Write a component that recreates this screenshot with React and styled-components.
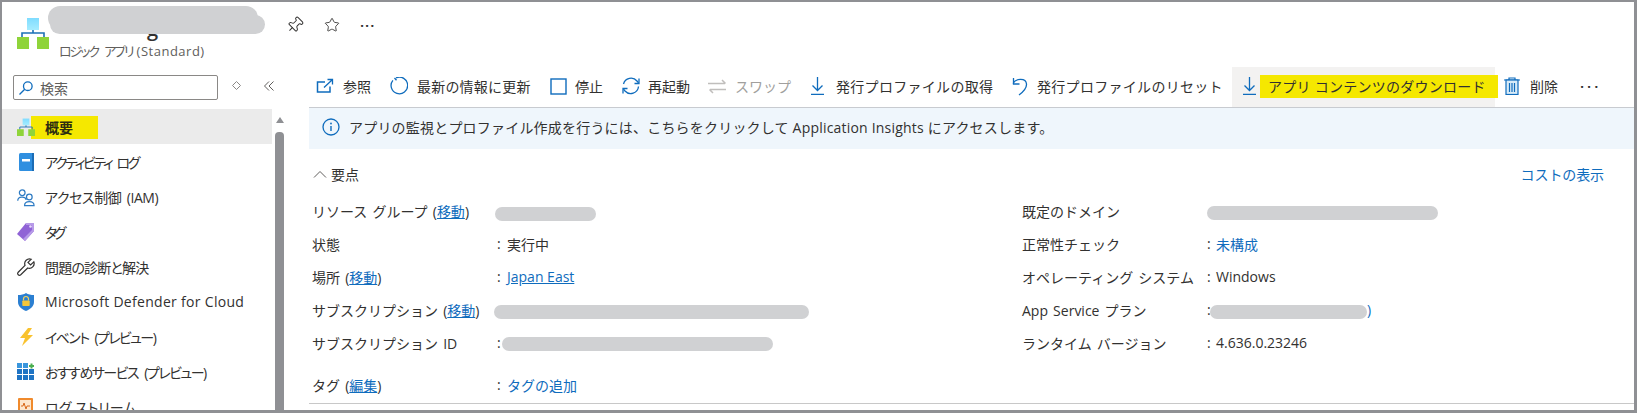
import React from "react";
import styled, { createGlobalStyle } from "styled-components";
import { Pin, Star } from "lucide-react";

const Global = createGlobalStyle`
  html, body { margin: 0; padding: 0; background: #fff; }
  * { box-sizing: border-box; }
  body { font-family: "Open Sans", "Noto Sans CJK JP", sans-serif; font-size: 14px; color: #323130; }
`;

const Frame = styled.div`
  width: 1637px; height: 413px; border: solid #8f9094; border-width: 2px 3px 3px 2px;
  overflow: hidden; display: flex; flex-direction: column; background: #fff;
`;
const Header = styled.header`
  height: 65px; flex: none; display: flex; padding: 15px 0 0 15px;
`;
const TitleBlock = styled.div`
  margin-left: 10px; width: 227px; position: relative; margin-top: -13px;
`;
const TitleText = styled.div`
  font-size: 20px; font-weight: 600; height: 39px; line-height: 28px; padding: 11px 0 0 88px; overflow: hidden;
`;
const TitleMask = styled.div`
  position: absolute; background: #d0d1d3; border-radius: 12px;
  left: ${p => p.$l}px; top: ${p => p.$t}px; width: ${p => p.$w}px; height: ${p => p.$h}px;
`;
const Subtitle = styled.div`
  font-size: 13px; line-height: 18px; color: #605e5c; white-space: nowrap; margin-top: -1px; letter-spacing: 0.5px;
`;
const SubtitleKana = styled.span`
  font-feature-settings: "palt"; letter-spacing: -2.1px; word-spacing: 5px; margin-right: 4px;
`;
const HeaderActions = styled.div`
  display: flex; align-items: center; height: 20px; margin: -2px 0 0 0; color: #323130; gap: 20px;
`;
const Dots = styled.span`
  font-size: 15px; line-height: 1; letter-spacing: ${p => p.$ls ?? 1}px; color: ${p => p.$c || "#323130"}; font-weight: 600;
`;
const Body = styled.div`flex: 1; display: flex; min-height: 0;`;
const Sidebar = styled.aside`width: 307px; flex: none; display: flex; flex-direction: column;`;
const SearchRow = styled.div`
  height: 42px; flex: none; padding: 8px 0 0 11px; display: flex; align-items: flex-start;
`;
const SearchBox = styled.div`
  width: 205px; height: 25px; border: 1px solid #8a8886; border-radius: 2px; display: flex; align-items: center;
  padding-left: 5px; gap: 7px; font-size: 14px; color: #605e5c;
`;
const SideTool = styled.span`
  display: flex; margin-top: 6px; margin-left: ${p => p.$ml}px; color: #8a8886;
`;
const SideBody = styled.div`display: flex; flex: 1; min-height: 0;`;
const Nav = styled.nav`width: 270px; flex: none;`;
const NavItem = styled.div`
  height: 35px; display: flex; align-items: center; padding-left: 15px; gap: 10px; white-space: nowrap;
  background: ${p => (p.$active ? "#ebebeb" : "transparent")};
`;
const NavIcon = styled.span`width: 18px; height: 18px; flex: none; display: flex; position: relative; z-index: 1;`;
const NavLabel = styled.span`
  font-size: 14px; font-feature-settings: "palt"; letter-spacing: ${p => p.$ls ?? 0}px; word-spacing: ${p => p.$ws ?? 0}px;
`;
const Marked = styled.span`
  background: #f5e800; margin-left: -14px; padding: 0 25px 0 14px; height: 23px; line-height: 23px; font-weight: 600;
  color: #2e2e10; margin-top: 1px;
`;
const Scroll = styled.div`
  width: 9px; margin-left: 3px; display: flex; flex-direction: column; align-items: center;
`;
const ScrollUp = styled.div`
  width: 0; height: 0; margin-top: 8px; border: 4.5px solid transparent; border-top: 0; border-bottom: 6px solid #8f9094;
`;
const ScrollThumb = styled.div`
  width: 9px; flex: 1; margin-top: 9px; background: #8f9094; border-radius: 4px 4px 0 0;
`;
const Main = styled.main`flex: 1; min-width: 0; display: flex; flex-direction: column;`;
const Toolbar = styled.div`
  height: 41px; flex: none; display: flex; border-bottom: 1px solid #c8cbd0;
`;
const ToolItem = styled.div`
  width: ${p => p.$w}px; flex: none; display: flex; align-items: center; white-space: nowrap;
  padding-left: ${p => p.$pad ?? 7}px; padding-bottom: 2px;
  background: ${p => (p.$active ? "#f3f2f1" : "transparent")};
  color: ${p => (p.$off ? "#a19f9d" : "#323130")};
`;
const ToolIcon = styled.span`
  width: ${p => p.$w ?? 27}px; flex: none; display: flex;
`;
const ToolLabel = styled.span`letter-spacing: ${p => p.$ls ?? 0}px;`;
const MarkedTool = styled.span`
  background: #f5e800; height: 23px; line-height: 23px; margin-left: -8px; padding: 0 12px 0 8px; letter-spacing: ${p => p.$ls ?? 0}px;
`;
const Banner = styled.div`
  height: 41px; flex: none; background: #eff6fc; display: flex; align-items: center; padding: 0 0 3px 13px; gap: 9px;
  letter-spacing: 0.2px; white-space: nowrap;
`;
const Essentials = styled.div`
  height: 45px; flex: none; display: flex; align-items: center; justify-content: space-between;
  padding: 5px 30px 0 4px;
`;
const EssentialsToggle = styled.div`display: flex; align-items: center; gap: 4px;`;
const CostLink = styled.a`color: #0f6cbd; text-decoration: none; letter-spacing: -0.1px;`;
const Columns = styled.div`display: grid; grid-template-columns: 710px 1fr; padding-left: 3px;`;
const Col = styled.div`display: flex; flex-direction: column;`;
const Row = styled.div`
  height: 33px; display: grid; grid-template-columns: 185px 1fr; align-items: center; white-space: nowrap;
`;
const Label = styled.span`word-spacing: 1.5px;`;
const Value = styled.span`display: flex; align-items: center;`;
const Colon = styled.span`width: ${p => p.$w ?? 10}px; flex: none; color: #323130;`;
const InlineLink = styled.a`color: #0f6cbd; text-decoration: underline;`;
const PlainLink = styled.a`color: #0f6cbd; text-decoration: none;`;
const Redacted = styled.span`
  display: block; height: 14px; border-radius: 7px; background: #d0d1d3;
  width: ${p => p.$w}px; margin-left: ${p => p.$ml ?? 0}px; margin-top: ${p => p.$mt ?? 0}px;
`;
const TagRow = styled(Row)`margin-top: 9px;`;
const Rule = styled.div`height: 1px; background: #c8c8c8; margin-top: 2px;`;

const Blue = "#0f6cbd";
const LogicIcon = ({ size = 32 }) => (
  <svg width={size} height={size} viewBox="0 0 32 32" style={{ flex: "none" }}>
    <defs>
      <linearGradient id="lgTop" x1="0" y1="0" x2="0" y2="1"><stop offset="0" stopColor="#7fdcff" /><stop offset="1" stopColor="#a5ecff" /></linearGradient>
    </defs>
    <path d="M16 12v4M5 21v-5h22v5" fill="none" stroke="#1c70b6" strokeWidth="1.6" />
    <rect x="10" y="1" width="12" height="12" fill="url(#lgTop)" />
    <rect x="0" y="20" width="12" height="12" fill="#8fd43a" />
    <rect x="20" y="20" width="12" height="12" fill="#8fd43a" />
  </svg>
);
const S = ({ w = 18, h = 18, vb = "0 0 18 18", children }) => (
  <svg width={w} height={h} viewBox={vb} fill="none" stroke={Blue} strokeWidth="1.3" style={{ flex: "none" }}>{children}</svg>
);
const OpenIcon = () => <S><path d="M9 5H1.5v10H14V9.5" strokeWidth="1.5" /><path d="M8 10.5 16 3M11.5 2.5h5v5" strokeWidth="1.3" /></S>;
const RefreshIcon = () => <S><path d="M4.500 1 6.500 3.300" /><path d="M6 .9A8.300 8.300 0 1 1 2.900 3.300" /></S>;
const StopIcon = () => <S w={17} h={17} vb="0 0 17 17"><rect x="1" y="1" width="15" height="15" strokeWidth="1.4" /></S>;
const RestartIcon = () => (
  <S w={20} h={20} vb="0 0 20 20">
    <path d="M2.5 8A7.8 7.8 0 0 1 16 5l1.5 1.8" />
    <path d="M17.5 10.5A7.8 7.8 0 0 1 4 15l-1.5-1.8" />
    <path d="M18 2.5v5h-4.5M2 17.5v-5h4.5" fill="none" />
  </S>
);
const SwapIcon = () => (
  <svg width="19" height="15" viewBox="0 0 19 15" fill="none" stroke="#c0bebc" strokeWidth="1.5" style={{ flex: "none" }}>
    <path d="M0 4.5h17M14 1l3.5 3.5M18 10.5H2M5 14 1.5 10.5" />
  </svg>
);
const DownIcon = () => <S w={13} h={18} vb="0 0 13 18"><path d="M6.5 0v13.5M1.5 8.5l5 5 5-5M0 17.3h13" /></S>;
const ResetIcon = () => <S w={16} h={19} vb="0 0 16 19"><path d="M1 6.5C4 1 14 1 14.5 7c.3 4-3.500 8-7.500 11M1.500 1v6h6" /></S>;
const TrashIcon = () => (
  <S w={16} h={18} vb="0 0 16 18">
    <path d="M0 3h16M5 3V1h6v2" strokeWidth="1.2" />
    <rect x="2" y="3" width="12" height="14.500" fill="#d8ebf8" strokeWidth="1.2" />
    <path d="M5.500 6v9M8 6v9M10.500 6v9" strokeWidth="1.2" />
  </S>
);
const InfoIcon = () => (
  <S><circle cx="9" cy="9" r="8" /><path d="M9 8v5" strokeWidth="1.4" /><circle cx="9" cy="5.500" r=".9" fill={Blue} stroke="none" /></S>
);
const SearchIcon = () => <S w={14} h={14} vb="0 0 14 14"><circle cx="8.800" cy="5.200" r="4.300" /><path d="M5.700 8.300 0.500 13.500" /></S>;
const Diamond = () => (
  <svg width="9" height="9" viewBox="0 0 9 9" fill="none" stroke="#8a8886"><path d="M4.500.5l4 4-4 4-4-4z" /></svg>
);
const DoubleLeft = () => (
  <svg width="10" height="10" viewBox="0 0 10 10" fill="none" stroke="#605e5c"><path d="M5 .5.500 5 5 9.500M9.500.5 5 5l4.500 4.500" /></svg>
);
const ChevronUp = () => (
  <svg width="14" height="8" viewBox="0 0 14 8" fill="none" stroke="#605e5c"><path d="M1 7.500l6-6 6 6" /></svg>
);
const BookIcon = () => (
  <svg width="15" height="18" viewBox="0 0 15 18" style={{ marginLeft: 2 }}>
    <rect width="15" height="18" rx="1.500" fill="#2f8fe0" /><rect x="13" width="2" height="18" fill="#1b6cb5" />
    <rect x="3" y="6" width="8" height="2.500" fill="#fff" />
  </svg>
);
const PeopleIcon = () => (
  <svg width="19" height="19" viewBox="0 0 19 19" fill="none" stroke="#2f7cc4" strokeWidth="1.3">
    <circle cx="5.500" cy="4.500" r="3" /><path d="M.8 13c0-5 8-5 9-1" />
    <circle cx="13" cy="9" r="3" /><path d="M8 18c0-5.500 10-5.500 10 0z" />
  </svg>
);
const TagIcon = () => (
  <svg width="17" height="18" viewBox="0 0 17 18">
    <path d="M9 0h8v8l-9 10-8-7z" fill="#9063d6" /><path d="M9 0h8v8L8 18l-2-2 9-9V2H9z" fill="#b79ae8" />
    <circle cx="13.500" cy="3.500" r="1.300" fill="#e8ddfa" />
  </svg>
);
const WrenchIcon = () => (
  <svg width="18" height="18" viewBox="0 0 18 18" fill="none" stroke="#323130" strokeWidth="1.200">
    <path d="M16.800 3.800 13.600 7 11 4.400 14.200 1.200A4.800 4.800 0 0 0 8 7.300L1 14.500a1.800 1.800 0 0 0 2.500 2.500l7.200-7a4.800 4.800 0 0 0 6.100-6.200z" />
  </svg>
);
const ShieldIcon = () => (
  <svg width="16" height="18" viewBox="0 0 16 18" style={{ marginLeft: 1 }}>
    <path d="M8 0c2 1.500 5 2 8 2v7c0 4-3 7-8 9-5-2-8-5-8-9V2c3 0 6-.5 8-2z" fill="#2b7fd1" />
    <path d="M5.500 7.500V6a2.500 2.500 0 0 1 5 0v1.500" fill="none" stroke="#f4d25a" strokeWidth="1.200" />
    <rect x="4.300" y="7.500" width="7.400" height="5.500" rx=".8" fill="#f4c63a" />
  </svg>
);
const BoltIcon = () => (
  <svg width="13" height="18" viewBox="0 0 13 18" style={{ marginLeft: 3 }}>
    <path d="M8 0 0 10h5l-3 8 11-11H7.500L12 0z" fill="#f9c22e" />
  </svg>
);
const GridIcon = () => (
  <svg width="17" height="17" viewBox="0 0 17 17">
    {[0, 1, 2].flatMap(r => [0, 1, 2].map(c => (r === 0 && c === 2) ? null : (
      <rect key={`${r}${c}`} x={c * 6} y={r * 6} width="5" height="5" fill={r === 0 ? "#3a96dd" : "#1f74c4"} />
    )))}
    <path d="M12 3h5M14.500.5v5" stroke="#4caf50" strokeWidth="2" />
  </svg>
);
const LogIcon = () => (
  <svg width="15" height="15" viewBox="0 0 15 15" style={{ marginLeft: 1 }}>
    <rect width="15" height="15" rx="1" fill="#f08a2c" /><rect x="2" y="2" width="11" height="11" fill="#fde6cc" />
    <path d="M3 8h2l1-3 2 6 1-3h3" fill="none" stroke="#d9691a" />
  </svg>
);

const navItems = [
  [<BookIcon />, "アクティビティ ログ", -2.4, 4],
  [<PeopleIcon />, "アクセス制御 (IAM)", -0.4, 2],
  [<TagIcon />, "タグ", -3.5, 0],
  [<WrenchIcon />, "問題の診断と解決", -0.8, 0],
  [<ShieldIcon />, "Microsoft Defender for Cloud", 0.3, 0],
  [<BoltIcon />, "イベント (プレビュー)", -1.6, 4],
  [<GridIcon />, "おすすめサービス (プレビュー)", -1.5, 4],
  [<LogIcon />, "ログ ストリーム", 0, 0],
];

const tools = [
  { w: 74, icon: <OpenIcon />, label: "参照" },
  { w: 160, icon: <RefreshIcon />, label: "最新の情報に更新", ls: 0.2 },
  { w: 71, icon: <StopIcon />, label: "停止", iw: 25 },
  { w: 87, icon: <RestartIcon />, label: "再起動" },
  { w: 103, icon: <SwapIcon />, label: "スワップ", off: true },
  { w: 201, icon: <DownIcon />, label: "発行プロファイルの取得", iw: 25, ls: 0.3 },
  { w: 227, icon: <ResetIcon />, label: "発行プロファイルのリセット", iw: 25, ls: 0.3 },
];

export default function App() {
  return (
    <>
      <Global />
      <Frame>
        <Header>
          <LogicIcon />
          <TitleBlock>
            <TitleText>g</TitleText>
            <TitleMask $l={-11} $t={2} $w={210} $h={24} />
            <TitleMask $l={-9} $t={11} $w={215} $h={19} />
            <Subtitle><SubtitleKana>ロジック アプリ</SubtitleKana>(Standard)</Subtitle>
          </TitleBlock>
          <HeaderActions>
            <Pin size={18} strokeWidth={1.3} style={{ transform: "rotate(45deg)" }} />
            <Star size={16} strokeWidth={1.3} />
            <Dots>···</Dots>
          </HeaderActions>
        </Header>
        <Body>
          <Sidebar>
            <SearchRow>
              <SearchBox><SearchIcon />検索</SearchBox>
              <SideTool $ml={14}><Diamond /></SideTool>
              <SideTool $ml={23}><DoubleLeft /></SideTool>
            </SearchRow>
            <SideBody>
              <Nav>
                <NavItem $active>
                  <NavIcon><LogicIcon size={18} /></NavIcon>
                  <Marked>概要</Marked>
                </NavItem>
                {navItems.map(([icon, label, ls, ws]) => (
                  <NavItem key={label}>
                    <NavIcon>{icon}</NavIcon>
                    <NavLabel $ls={ls} $ws={ws}>{label}</NavLabel>
                  </NavItem>
                ))}
              </Nav>
              <Scroll><ScrollUp /><ScrollThumb /></Scroll>
            </SideBody>
          </Sidebar>
          <Main>
            <Toolbar>
              {tools.map(t => (
                <ToolItem key={t.label} $w={t.w} $off={t.off}>
                  <ToolIcon $w={t.iw}>{t.icon}</ToolIcon>
                  <ToolLabel $ls={t.ls}>{t.label}</ToolLabel>
                </ToolItem>
              ))}
              <ToolItem $w={263} $pad={11} $active>
                <ToolIcon $w={25}><DownIcon /></ToolIcon>
                <MarkedTool $ls={0.25}>アプリ コンテンツのダウンロード</MarkedTool>
              </ToolItem>
              <ToolItem $w={85} $pad={9}>
                <ToolIcon $w={26}><TrashIcon /></ToolIcon>
                <ToolLabel>削除</ToolLabel>
              </ToolItem>
              <ToolItem $w={40} $pad={0}><Dots $ls={3}>···</Dots></ToolItem>
            </Toolbar>
            <Banner>
              <InfoIcon />
              アプリの監視とプロファイル作成を行うには、こちらをクリックして Application Insights にアクセスします。
            </Banner>
            <Essentials>
              <EssentialsToggle><ChevronUp />要点</EssentialsToggle>
              <CostLink>コストの表示</CostLink>
            </Essentials>
            <Columns>
              <Col>
                <Row>
                  <Label>リソース グループ (<InlineLink>移動</InlineLink>)</Label>
                  <Value><Redacted $w={101} $ml={-2} $mt={7} /></Value>
                </Row>
                <Row>
                  <Label>状態</Label>
                  <Value><Colon>:</Colon>実行中</Value>
                </Row>
                <Row>
                  <Label>場所 (<InlineLink>移動</InlineLink>)</Label>
                  <Value><Colon>:</Colon><InlineLink>Japan East</InlineLink></Value>
                </Row>
                <Row>
                  <Label>サブスクリプション (<InlineLink>移動</InlineLink>)</Label>
                  <Value><Redacted $w={315} $ml={-3} $mt={5} /></Value>
                </Row>
                <Row>
                  <Label>サブスクリプション ID</Label>
                  <Value><Colon $w={5}>:</Colon><Redacted $w={271} $mt={3} /></Value>
                </Row>
                <TagRow>
                  <Label>タグ (<InlineLink>編集</InlineLink>)</Label>
                  <Value><Colon>:</Colon><PlainLink>タグの追加</PlainLink></Value>
                </TagRow>
              </Col>
              <Col>
                <Row>
                  <Label>既定のドメイン</Label>
                  <Value><Redacted $w={231} $mt={4} /></Value>
                </Row>
                <Row>
                  <Label>正常性チェック</Label>
                  <Value><Colon $w={9}>:</Colon><PlainLink>未構成</PlainLink></Value>
                </Row>
                <Row>
                  <Label>オペレーティング システム</Label>
                  <Value><Colon $w={9}>:</Colon>Windows</Value>
                </Row>
                <Row>
                  <Label>App Service プラン</Label>
                  <Value><Colon $w={3}>:</Colon><Redacted $w={157} $mt={5} /><PlainLink>)</PlainLink></Value>
                </Row>
                <Row>
                  <Label>ランタイム バージョン</Label>
                  <Value><Colon $w={9}>:</Colon>4.636.0.23246</Value>
                </Row>
              </Col>
            </Columns>
            <Rule />
          </Main>
        </Body>
      </Frame>
    </>
  );
}
